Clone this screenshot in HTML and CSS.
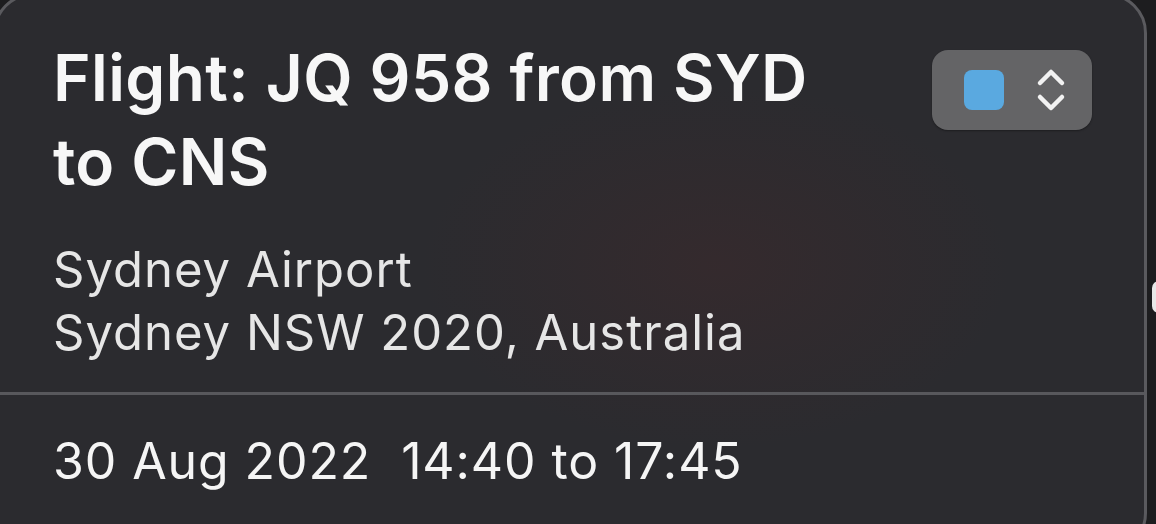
FILE: index.html
```html
<!DOCTYPE html>
<html lang="en">
<head>
<meta charset="utf-8">
<title>Flight event</title>
<link rel="stylesheet" href="styles.css">
</head>
<body>
<div class="screen">
  <section class="panel">
    <div class="top">
      <header class="header">
        <h1 class="title">Flight: JQ 958 from SYD to CNS</h1>
        <button class="calendar-popup" type="button" aria-label="Calendar colour">
          <span class="swatch"></span>
          <svg class="chevrons" width="30" height="44" viewBox="0 0 30 44" aria-hidden="true">
            <path d="M4 15 L15 4 L26 15" />
            <path d="M4 29 L15 40 L26 29" />
          </svg>
        </button>
      </header>
      <div class="location">
        <div>Sydney Airport</div>
        <div>Sydney NSW 2020, Australia</div>
      </div>
    </div>
    <div class="when">30 Aug 2022&nbsp; 14:40 to 17:45</div>
  </section>
  <span class="edge-knob"></span>
</div>
</body>
</html>
```

FILE: styles.css
```css
html, body {
  margin: 0;
  padding: 0;
  height: 100%;
  overflow: hidden;
  background: #1d1d1f;
}

.screen {
  position: relative;
  width: 1156px;
  height: 524px;
  overflow: hidden;
  font-family: Inter, "Noto Sans", "Liberation Sans", sans-serif;
}

.panel {
  margin: -7px 0 0 -7px;
  width: 1154px;
  height: 560px;
  box-sizing: border-box;
  border: 3px solid #5a5a5e;
  border-radius: 40px;
  background:
    radial-gradient(ellipse 420px 260px at 720px 270px, rgba(70, 40, 42, 0.35), rgba(70, 40, 42, 0) 70%),
    #2b2b2f;
  display: flex;
  flex-direction: column;
}

.top {
  padding: 40px 52px 0 57px;
  height: 356px;
  border-bottom: 3px solid #58585c;
}

.header {
  display: flex;
  align-items: flex-start;
  justify-content: space-between;
}

.title {
  margin: 0;
  max-width: 810px;
  font-size: 64px;
  line-height: 84px;
  font-weight: 600;
  color: #f7f7f7;
  letter-spacing: 0.4px;
}

.calendar-popup {
  margin-top: 14px;
  width: 160px;
  height: 80px;
  border: none;
  border-radius: 16px;
  background: #646466;
  display: flex;
  align-items: center;
  gap: 32px;
  padding: 0 0 0 32px;
  box-shadow: 0 1px 2px rgba(0, 0, 0, 0.35);
}

.swatch {
  width: 40px;
  height: 40px;
  border-radius: 8px;
  background: #5aa9e0;
}

.chevrons path {
  fill: none;
  stroke: #f2f2f2;
  stroke-width: 4.5;
  stroke-linecap: round;
  stroke-linejoin: round;
}

.location {
  margin-top: 34px;
  font-size: 49px;
  line-height: 63px;
  letter-spacing: 1px;
  color: #e6e6e6;
}

.when {
  padding: 36px 0 0 57px;
  font-size: 50px;
  line-height: 60px;
  letter-spacing: 0.9px;
  color: #f5f5f5;
}

.edge-knob {
  position: absolute;
  left: 1152px;
  top: 281px;
  width: 14px;
  height: 32px;
  border-radius: 7px;
  background: #e8e8e8;
}
```
